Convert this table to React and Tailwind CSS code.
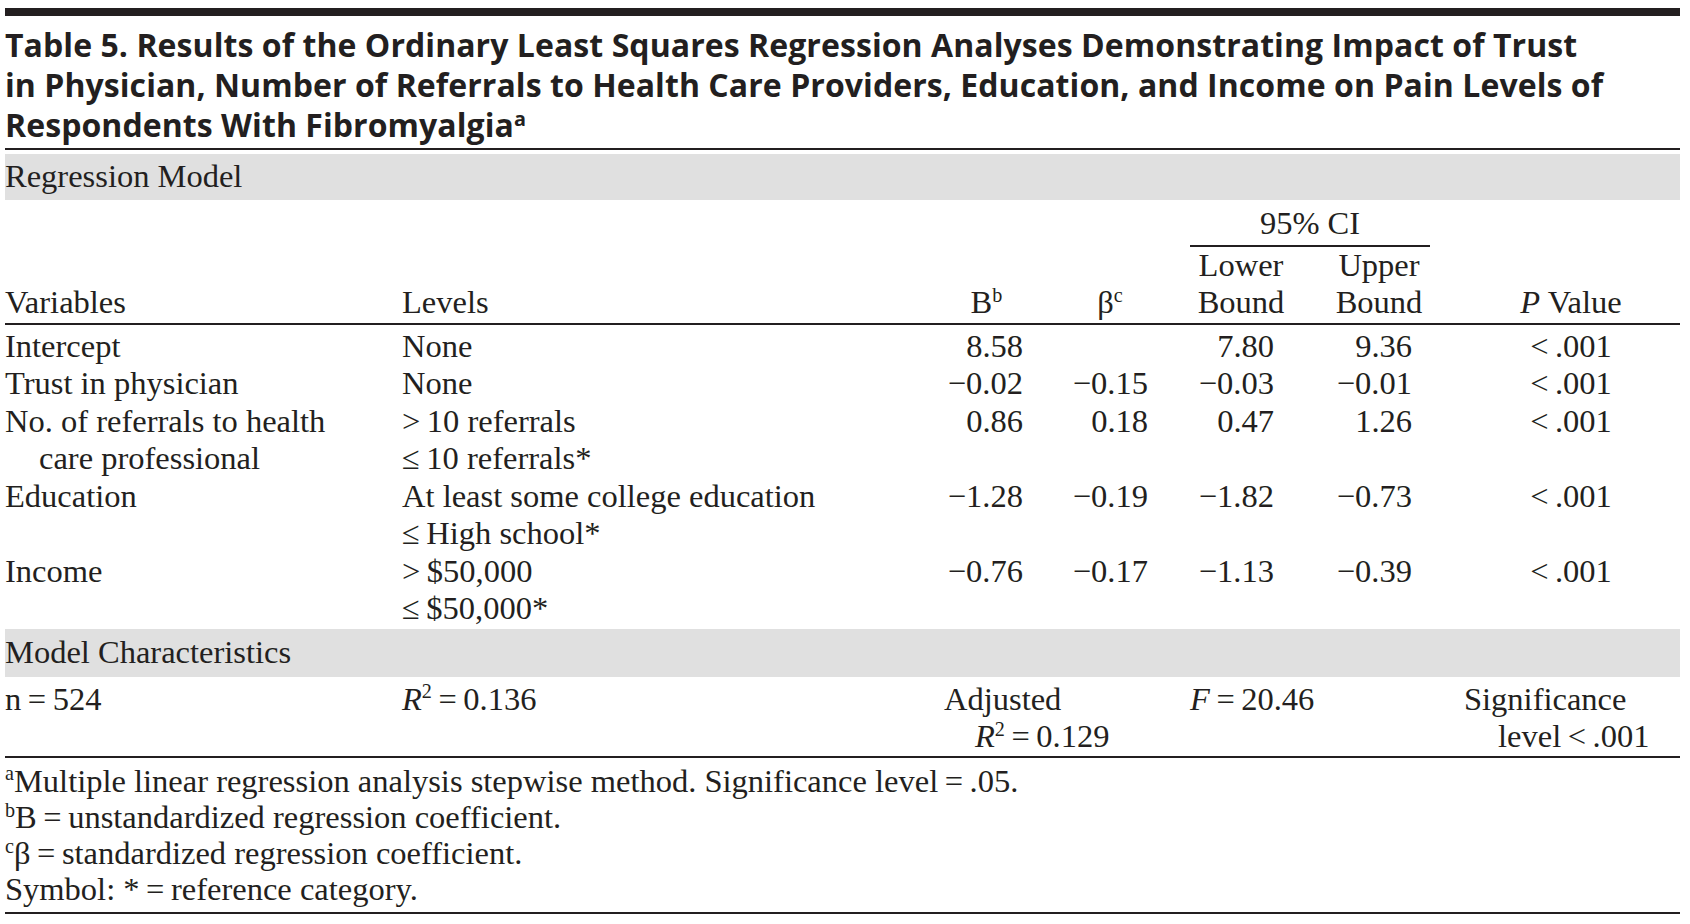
import React from "react";

const T = "\u2009";

function Sup({ children }) {
  return (
    <span className="relative top-[-0.55em] text-[0.62em] leading-none">{children}</span>
  );
}

function Rule({ className = "" }) {
  return <div className={"h-[2px] bg-[#231f20] " + className} />;
}

function Lines({ items }) {
  const arr = Array.isArray(items) ? items : [items];
  return arr.map((it, i) => (
    <div key={i} className="whitespace-nowrap">
      {it}
    </div>
  ));
}

function DataRow({ v, l, b, beta, lo, up, p }) {
  return (
    <div className="flex">
      <div className="w-[397px]">
        <Lines items={v} />
      </div>
      <div className="w-[538px]">
        <Lines items={l} />
      </div>
      <div className="w-[90px] pr-[7px] text-right whitespace-nowrap">{b}</div>
      <div className="w-[160px] pr-[42px] text-right whitespace-nowrap">{beta}</div>
      <div className="w-[120px] pr-[36px] text-right whitespace-nowrap">{lo}</div>
      <div className="w-[120px] pr-[18px] text-right whitespace-nowrap">{up}</div>
      <div className="w-[250px] pl-[32px] text-center whitespace-nowrap">{p}</div>
    </div>
  );
}

const P = `<${T}.001`;

export default function App() {
  return (
    <div className="w-[1690px] h-[924px] overflow-hidden bg-white text-[#231f20]">
      <div className="ml-[5px] w-[1675px] pt-[8px]">
        <div className="h-[8px] bg-[#231f20]" />
        <div className="pt-[9px] font-['Open_Sans',sans-serif] font-bold text-[32px] leading-[40px] tracking-[0.002em] whitespace-nowrap">
          <div>Table 5. Results of the Ordinary Least Squares Regression Analyses Demonstrating Impact of Trust</div>
          <div>in Physician, Number of Referrals to Health Care Providers, Education, and Income on Pain Levels of</div>
          <div>
            Respondents With Fibromyalgia<Sup>a</Sup>
          </div>
        </div>
        <Rule className="mt-[3px]" />
        <div className="font-['Liberation_Serif',serif] text-[32.5px] leading-[37.5px]">
          <div className="mt-[4px] h-[46px] bg-[#e0e0e0] flex items-center">Regression Model</div>

          <div className="flex items-end pt-[5px] pb-[1px]">
            <div className="w-[397px]">Variables</div>
            <div className="w-[538px]">Levels</div>
            <div className="w-[90px] pl-[10px] pr-[7px] text-center whitespace-nowrap">
              B<Sup>b</Sup>
            </div>
            <div className="w-[160px] text-center whitespace-nowrap">
              β<Sup>c</Sup>
            </div>
            <div className="w-[240px] flex flex-col">
              <div className="text-center pb-[2px] border-b-2 border-[#231f20]">95% CI</div>
              <div className="flex">
                <div className="w-[120px] pr-[18px] text-center">
                  <div>Lower</div>
                  <div>Bound</div>
                </div>
                <div className="w-[120px] pl-[18px] text-center">
                  <div>Upper</div>
                  <div>Bound</div>
                </div>
              </div>
            </div>
            <div className="w-[250px] pl-[32px] text-center whitespace-nowrap">
              <i>P</i> Value
            </div>
          </div>
          <Rule />

          <div className="pt-[3px]">
            <DataRow v="Intercept" l="None" b="8.58" beta="" lo="7.80" up="9.36" p={P} />
            <DataRow v="Trust in physician" l="None" b="−0.02" beta="−0.15" lo="−0.03" up="−0.01" p={P} />
            <DataRow
              v={["No. of referrals to health", <span className="pl-[34px]">care professional</span>]}
              l={[`>${T}10 referrals`, `≤${T}10 referrals*`]}
              b="0.86"
              beta="0.18"
              lo="0.47"
              up="1.26"
              p={P}
            />
            <DataRow
              v="Education"
              l={["At least some college education", `≤${T}High school*`]}
              b="−1.28"
              beta="−0.19"
              lo="−1.82"
              up="−0.73"
              p={P}
            />
            <DataRow
              v="Income"
              l={[`>${T}$50,000`, `≤${T}$50,000*`]}
              b="−0.76"
              beta="−0.17"
              lo="−1.13"
              up="−0.39"
              p={P}
            />
          </div>

          <div className="mt-[1px] h-[48px] bg-[#e0e0e0] flex items-center">Model Characteristics</div>

          <div className="flex pt-[4px] whitespace-nowrap">
            <div className="w-[397px]">n{T}={T}524</div>
            <div className="w-[542px]">
              <i>R</i>
              <Sup>2</Sup>
              {T}={T}0.136
            </div>
            <div className="w-[246px]">
              <div>Adjusted</div>
              <div className="pl-[31px]">
                <i>R</i>
                <Sup>2</Sup>
                {T}={T}0.129
              </div>
            </div>
            <div className="w-[274px]">
              <i>F</i>
              {T}={T}20.46
            </div>
            <div className="w-[216px]">
              <div>Significance</div>
              <div className="pl-[34px]">{`level${T}<${T}.001`}</div>
            </div>
          </div>
          <Rule />

          <div className="pt-[5px] leading-[36.3px] whitespace-nowrap">
            <div>
              <Sup>a</Sup>Multiple linear regression analysis stepwise method. Significance level{T}={T}.05.
            </div>
            <div>
              <Sup>b</Sup>B{T}={T}unstandardized regression coefficient.
            </div>
            <div>
              <Sup>c</Sup>β{T}={T}standardized regression coefficient.
            </div>
            <div>Symbol: *{T}={T}reference category.</div>
          </div>
          <Rule className="mt-[4px]" />
        </div>
      </div>
    </div>
  );
}
